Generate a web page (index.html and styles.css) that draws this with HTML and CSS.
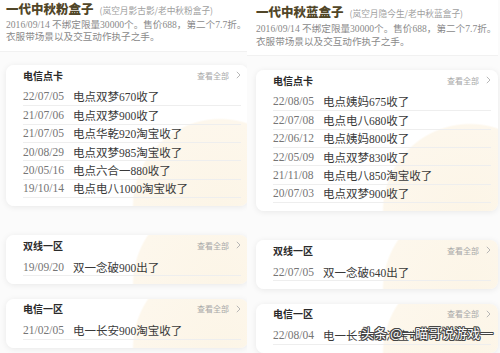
FILE: index.html
```html
<!DOCTYPE html>
<html lang="zh">
<head>
<meta charset="utf-8">
<title>中秋盒子</title>
<link rel="stylesheet" href="styles.css">
</head>
<body>
<div class="page">
  <section class="panel panel-left">
    <header class="intro">
      <h1 class="title">一代中秋粉盒子<span class="alias">(岚空月影古影/老中秋粉盒子)</span></h1>
      <p class="desc">2016/09/14 不绑定限量30000个。售价688，第二个7.7折。<br>衣服带场景以及交互动作执子之手。</p>
    </header>
    <div class="card card-first">
      <div class="card-head"><span class="card-title">电信点卡</span><span class="more">查看全部<svg class="chev" width="5" height="8" viewBox="0 0 5 8"><path d="M0.8 0.8 L4 4 L0.8 7.2" fill="none" stroke="#b0b0b0" stroke-width="0.9"/></svg></span></div>
      <ul class="rows">
        <li class="row"><span class="date">22/07/05</span><span class="what">电点双梦670收了</span></li>
        <li class="row"><span class="date">21/07/06</span><span class="what">电点双梦900收了</span></li>
        <li class="row"><span class="date">21/07/05</span><span class="what">电点华乾920淘宝收了</span></li>
        <li class="row"><span class="date">20/08/29</span><span class="what">电点双梦985淘宝收了</span></li>
        <li class="row"><span class="date">20/05/16</span><span class="what">电点六合一880收了</span></li>
        <li class="row"><span class="date">19/10/14</span><span class="what">电点电八1000淘宝收了</span></li>
      </ul>
    </div>
    <div class="card card-second">
      <div class="card-head"><span class="card-title">双线一区</span><span class="more">查看全部<svg class="chev" width="5" height="8" viewBox="0 0 5 8"><path d="M0.8 0.8 L4 4 L0.8 7.2" fill="none" stroke="#b0b0b0" stroke-width="0.9"/></svg></span></div>
      <ul class="rows">
        <li class="row"><span class="date">19/09/20</span><span class="what">双一念破900出了</span></li>
      </ul>
    </div>
    <div class="card card-third">
      <div class="card-head"><span class="card-title">电信一区</span><span class="more">查看全部<svg class="chev" width="5" height="8" viewBox="0 0 5 8"><path d="M0.8 0.8 L4 4 L0.8 7.2" fill="none" stroke="#b0b0b0" stroke-width="0.9"/></svg></span></div>
      <ul class="rows">
        <li class="row"><span class="date">21/02/05</span><span class="what">电一长安900淘宝收了</span></li>
      </ul>
    </div>
  </section>

  <section class="panel panel-right">
    <header class="intro intro-right">
      <h1 class="title">一代中秋蓝盒子<span class="alias">(岚空月隐今生/老中秋蓝盒子)</span></h1>
      <p class="desc">2016/09/14 不绑定限量30000个。售价688，第二个7.7折。<br>衣服带场景以及交互动作执子之手。</p>
    </header>
    <div class="card card-first">
      <div class="card-head"><span class="card-title">电信点卡</span><span class="more">查看全部<svg class="chev" width="5" height="8" viewBox="0 0 5 8"><path d="M0.8 0.8 L4 4 L0.8 7.2" fill="none" stroke="#b0b0b0" stroke-width="0.9"/></svg></span></div>
      <ul class="rows">
        <li class="row"><span class="date">22/08/05</span><span class="what">电点姨妈675收了</span></li>
        <li class="row"><span class="date">22/07/08</span><span class="what">电点电八680收了</span></li>
        <li class="row"><span class="date">22/06/12</span><span class="what">电点姨妈800收了</span></li>
        <li class="row"><span class="date">22/05/09</span><span class="what">电点双梦830收了</span></li>
        <li class="row"><span class="date">21/11/08</span><span class="what">电点电八850淘宝收了</span></li>
        <li class="row"><span class="date">20/07/03</span><span class="what">电点双梦900收了</span></li>
      </ul>
    </div>
    <div class="card card-second">
      <div class="card-head"><span class="card-title">双线一区</span><span class="more">查看全部<svg class="chev" width="5" height="8" viewBox="0 0 5 8"><path d="M0.8 0.8 L4 4 L0.8 7.2" fill="none" stroke="#b0b0b0" stroke-width="0.9"/></svg></span></div>
      <ul class="rows">
        <li class="row"><span class="date">22/07/05</span><span class="what">双一念破640出了</span></li>
      </ul>
    </div>
    <div class="card card-third">
      <div class="card-head"><span class="card-title">电信一区</span><span class="more">查看全部<svg class="chev" width="5" height="8" viewBox="0 0 5 8"><path d="M0.8 0.8 L4 4 L0.8 7.2" fill="none" stroke="#b0b0b0" stroke-width="0.9"/></svg></span></div>
      <ul class="rows">
        <li class="row"><span class="date">22/08/04</span><span class="what">电一长安900淘宝收了</span></li>
      </ul>
    </div>
  </section>

  <div class="watermark">头条 @一瞄哥说游戏一</div>
</div>
</body>
</html>
```

FILE: styles.css
```css
* { box-sizing: border-box; }

html, body {
  margin: 0;
  padding: 0;
  background: #fbfbfb;
}

.page {
  position: relative;
  width: 500px;
  height: 353px;
  overflow: hidden;
  display: flex;
  font-family: "Liberation Serif", "Noto Sans CJK SC", serif;
}

.panel {
  display: flex;
  flex-direction: column;
  overflow: hidden;
  flex: none;
}

.panel-left {
  width: 247px;
  padding-left: 6px;
}

.panel-right {
  width: 253px;
  padding-left: 9px;
  padding-right: 2px;
}

.intro {
  background: #fff;
  margin-left: -9px;
  padding-left: 9px;
  padding-bottom: 7px;
  border-bottom: 1px solid #f1f1f1;
}

.panel-left .intro {
  margin-left: -6px;
  padding-left: 6px;
}

.intro-right {
  padding-top: 3px;
}

.title {
  margin: 0;
  padding-top: 0.5px;
  font-family: "Noto Sans CJK SC", sans-serif;
  font-size: 12.5px;
  font-weight: 900;
  line-height: 16px;
  color: #514628;
  white-space: nowrap;
}

.alias {
  margin-left: 6px;
  font-size: 8.7px;
  font-weight: 400;
  color: #a0a0a0;
}

.desc {
  margin: 0 0 0;
  font-size: 9.6px;
  line-height: 12.5px;
  color: #8a8a8a;
  white-space: nowrap;
}

.intro-right .desc {
  line-height: 13px;
}

.card {
  flex: none;
  width: 242px;
  padding: 0 7px 7.5px 17px;
  border-radius: 8px;
  background: radial-gradient(circle 88px at 214px 100%, #fcf5e7 0, #fdf7ec 86px, #ffffff 88px);
  box-shadow: 0 1px 6px rgba(0, 0, 0, 0.08);
}

.card-first { margin-top: 13.5px; }
.intro-right + .card-first { margin-top: 14.5px; }
.card-second { margin-top: 29.5px; }
.card-third { margin-top: 15px; }

.card-head {
  display: flex;
  justify-content: space-between;
  align-items: center;
  height: 20px;
}

.card-title {
  font-family: "Noto Sans CJK SC", sans-serif;
  font-size: 10px;
  font-weight: 700;
  color: #2a2a2a;
}

.more {
  display: flex;
  align-items: center;
  font-family: "Noto Sans CJK SC", sans-serif;
  font-size: 8px;
  color: #a8a8a8;
}

.chev {
  margin-left: 7px;
  display: block;
}

.rows {
  list-style: none;
  margin: 2.8px 0 0;
  padding: 0;
}

.row {
  display: flex;
  align-items: center;
  height: 18.4px;
  border-bottom: 1px solid #eeeeee;
  font-size: 11.5px;
  white-space: nowrap;
}

.date {
  color: #757575;
  width: 50px;
  flex: none;
}

.what {
  color: #3a3a3a;
}

.watermark {
  position: absolute;
  left: 361px;
  top: 324px;
  font-family: "Noto Sans CJK SC", sans-serif;
  font-size: 13px;
  line-height: 18px;
  color: #ffffff;
  white-space: nowrap;
  text-shadow: 1px 0 0 #444, -1px 0 0 #444, 0 1px 0 #444, 0 -1px 0 #444,
    0.7px 0.7px 0 #444, -0.7px -0.7px 0 #444, 0.7px -0.7px 0 #444, -0.7px 0.7px 0 #444;
}
```
